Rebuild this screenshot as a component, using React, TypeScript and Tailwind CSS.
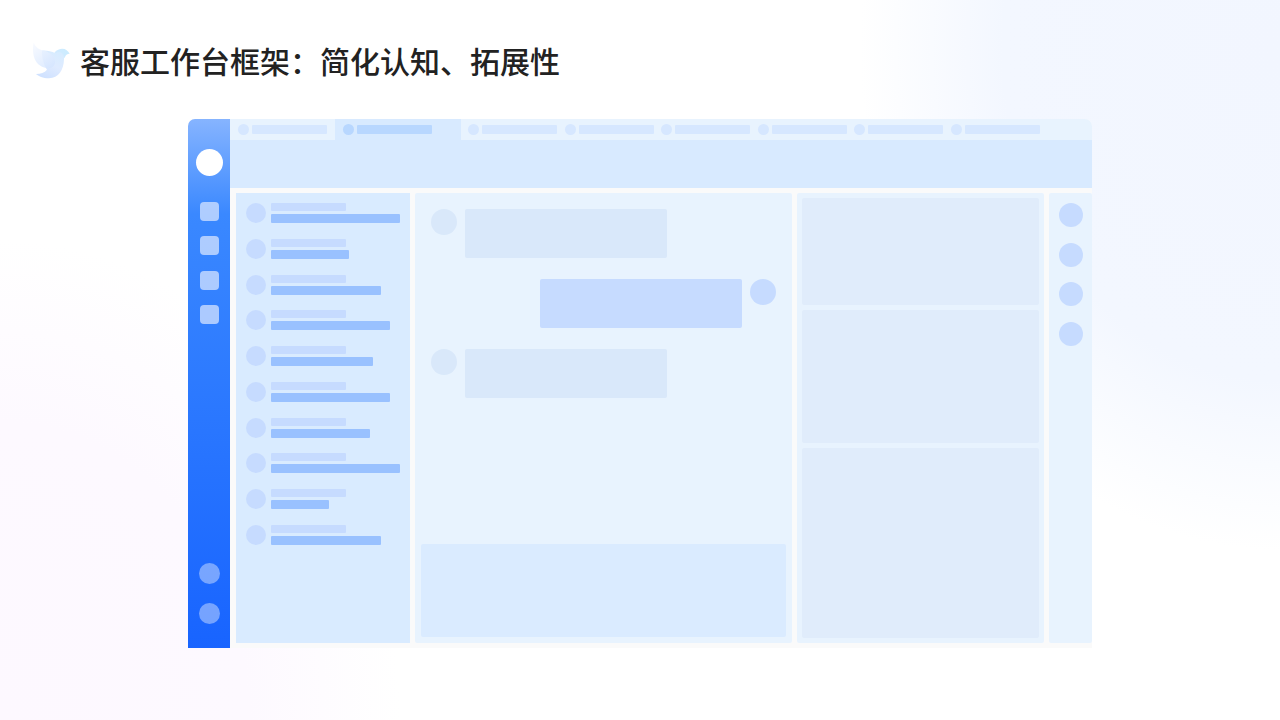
const conversationWidths = [129, 78, 110, 119, 102, 119, 99, 129, 58, 110];

function BirdLogo() {
  return (
    <svg className="size-[38px] shrink-0" viewBox="15 16 114 114" aria-hidden="true">
      <defs>
        <linearGradient id="wing" x1="0.1" y1="0" x2="0.7" y2="1">
          <stop offset="0" stopColor="#f6f9ff" />
          <stop offset="1" stopColor="#d6e6ff" />
        </linearGradient>
        <linearGradient id="body" x1="0.8" y1="0" x2="0.3" y2="1">
          <stop offset="0" stopColor="#d6ecff" />
          <stop offset="0.5" stopColor="#dfebff" />
          <stop offset="1" stopColor="#cfe1ff" />
        </linearGradient>
        <linearGradient id="head" x1="0" y1="0.6" x2="1" y2="0.2">
          <stop offset="0" stopColor="#d4eaff" />
          <stop offset="1" stopColor="#c9ecff" />
        </linearGradient>
      </defs>
      <path d="M79 45C86 36 95 33 103 33C113 33 120 39 125 48C118 48 114 51 111 58C106 68 92 62 79 45Z" fill="url(#head)" />
      <path d="M42 39C56 38 70 41 82 47C89 43 95 42 100 45C107 49 109 56 108 65C107 98 92 121 63 122C45 122 31 115 24 109C38 109 50 105 57 96C47 80 41 58 42 39Z" fill="url(#body)" />
      <path d="M17 15C23 29 33 36 48 39C65 43 80 54 81 70C82 85 72 94 56 91C36 88 22 75 17 54C14 40 14 27 17 15Z" fill="url(#wing)" fillOpacity="0.8" />
    </svg>
  );
}

function Tab({ active = false }: { active?: boolean }) {
  return (
    <div className="flex items-center gap-[3px]">
      <span className={active ? "size-[11px] rounded-full bg-[#b8d7ff]" : "size-[11px] rounded-full bg-[#d6e7ff]"} />
      <span className={active ? "h-[9px] w-[75px] rounded-[1px] bg-[#b8d7ff]" : "h-[9px] w-[75px] rounded-[1px] bg-[#d6e7ff]"} />
    </div>
  );
}

function Sidebar() {
  return (
    <nav className="flex w-[42px] shrink-0 flex-col items-center bg-[linear-gradient(180deg,#86b4ff_0%,#3a88ff_18%,#1864ff_100%)] pt-[30px] pb-6">
      <span className="size-[27px] rounded-full bg-white" />
      <div className="mt-[26px] flex h-[122px] flex-col justify-between">
        {[0, 1, 2, 3].map((i) => (
          <span key={i} className="size-[19px] rounded-[4px] bg-[#e6eeff]/68" />
        ))}
      </div>
      <div className="mt-auto flex flex-col gap-[19px]">
        <span className="size-[21px] rounded-full bg-white/40" />
        <span className="size-[21px] rounded-full bg-white/40" />
      </div>
    </nav>
  );
}

function ConversationList() {
  return (
    <section className="w-[174px] shrink-0 bg-[#d9ebff] px-[10px] pt-[10px]">
      <ul className="flex h-[342px] flex-col justify-between">
        {conversationWidths.map((width, i) => (
          <li key={i} className="flex h-5 gap-[5px]">
            <span className="size-5 shrink-0 rounded-full bg-[#c6dbff]" />
            <div className="flex flex-col gap-[3px]">
              <span className="h-2 w-[75px] rounded-[1px] bg-[#c6dbff]" />
              <span className="h-[9px] rounded-[1px] bg-[#99c1ff]" style={{ width }} />
            </div>
          </li>
        ))}
      </ul>
    </section>
  );
}

function Message({ own = false }: { own?: boolean }) {
  return (
    <div className={own ? "flex flex-row-reverse gap-2" : "flex gap-2"}>
      <span className={own ? "size-[26px] shrink-0 rounded-full bg-[#c6dbff]" : "size-[26px] shrink-0 rounded-full bg-[#d9e8fa]"} />
      <div className={own ? "h-[49px] w-[202px] rounded-[2px] bg-[#c6dbff]" : "h-[49px] w-[202px] rounded-[2px] bg-[#d9e8fa]"} />
    </div>
  );
}

function Chat() {
  return (
    <section className="flex min-w-0 flex-1 flex-col rounded-[2px] bg-[#e8f3fe] p-[6px]">
      <div className="flex flex-col gap-[21px] px-[10px] pt-[10px]">
        <Message />
        <Message own />
        <Message />
      </div>
      <div className="mt-auto h-[93px] rounded-[2px] bg-[#daebff]" />
    </section>
  );
}

function InfoCards() {
  return (
    <section className="flex w-[247px] shrink-0 flex-col gap-[5px] rounded-[2px] bg-[#e8f3fe] p-[5px]">
      <div className="h-[107px] rounded-[2px] bg-[#e0ecfb]" />
      <div className="h-[133px] rounded-[2px] bg-[#e0ecfb]" />
      <div className="h-[190px] rounded-[2px] bg-[#e0ecfb]" />
    </section>
  );
}

function ToolRail() {
  return (
    <aside className="flex w-[43px] shrink-0 justify-center rounded-[2px] bg-[#e8f3fe] pt-[10px]">
      <div className="flex h-[143px] flex-col justify-between">
        {[0, 1, 2, 3].map((i) => (
          <span key={i} className="size-6 rounded-full bg-[#c6dbff]" />
        ))}
      </div>
    </aside>
  );
}

export default function App() {
  return (
    <div className="min-h-screen bg-white bg-[radial-gradient(420px_500px_at_100%_50px,#f2f6ff_0%,#f3f7ff_66%,rgba(255,255,255,0)_100%),radial-gradient(400px_480px_at_0%_720px,#fdf8ff_0%,#fdf9ff_62%,rgba(255,255,255,0)_100%)] font-['Noto_Sans_CJK_SC',sans-serif]">
      <header className="flex items-center gap-[9px] px-[33px] pt-10">
        <BirdLogo />
        <h1 className="pb-1 text-[30px] leading-[40px] font-medium text-[#222222]">客服工作台框架：简化认知、拓展性</h1>
      </header>
      <main className="mx-auto mt-[35px] flex w-full max-w-[904px] overflow-hidden rounded-t-[7px] bg-[#fafafa]">
        <Sidebar />
        <div className="flex min-w-0 flex-1 flex-col">
          <div className="flex h-[21px] bg-[#e8f3fe]">
            <div className="flex w-[105px] shrink-0 items-center pl-2">
              <Tab />
            </div>
            <div className="flex w-[126px] shrink-0 items-center bg-[#d8eaff] pl-2">
              <Tab active />
            </div>
            <div className="flex w-[579px] items-center justify-between pl-[7px]">
              {[0, 1, 2, 3, 4, 5].map((i) => (
                <Tab key={i} />
              ))}
            </div>
          </div>
          <div className="h-12 bg-[#d8eaff]" />
          <div className="flex min-h-[460px] gap-[5px] pt-[5px] pb-[5px] pl-[6px]">
            <ConversationList />
            <Chat />
            <InfoCards />
            <ToolRail />
          </div>
        </div>
      </main>
    </div>
  );
}
